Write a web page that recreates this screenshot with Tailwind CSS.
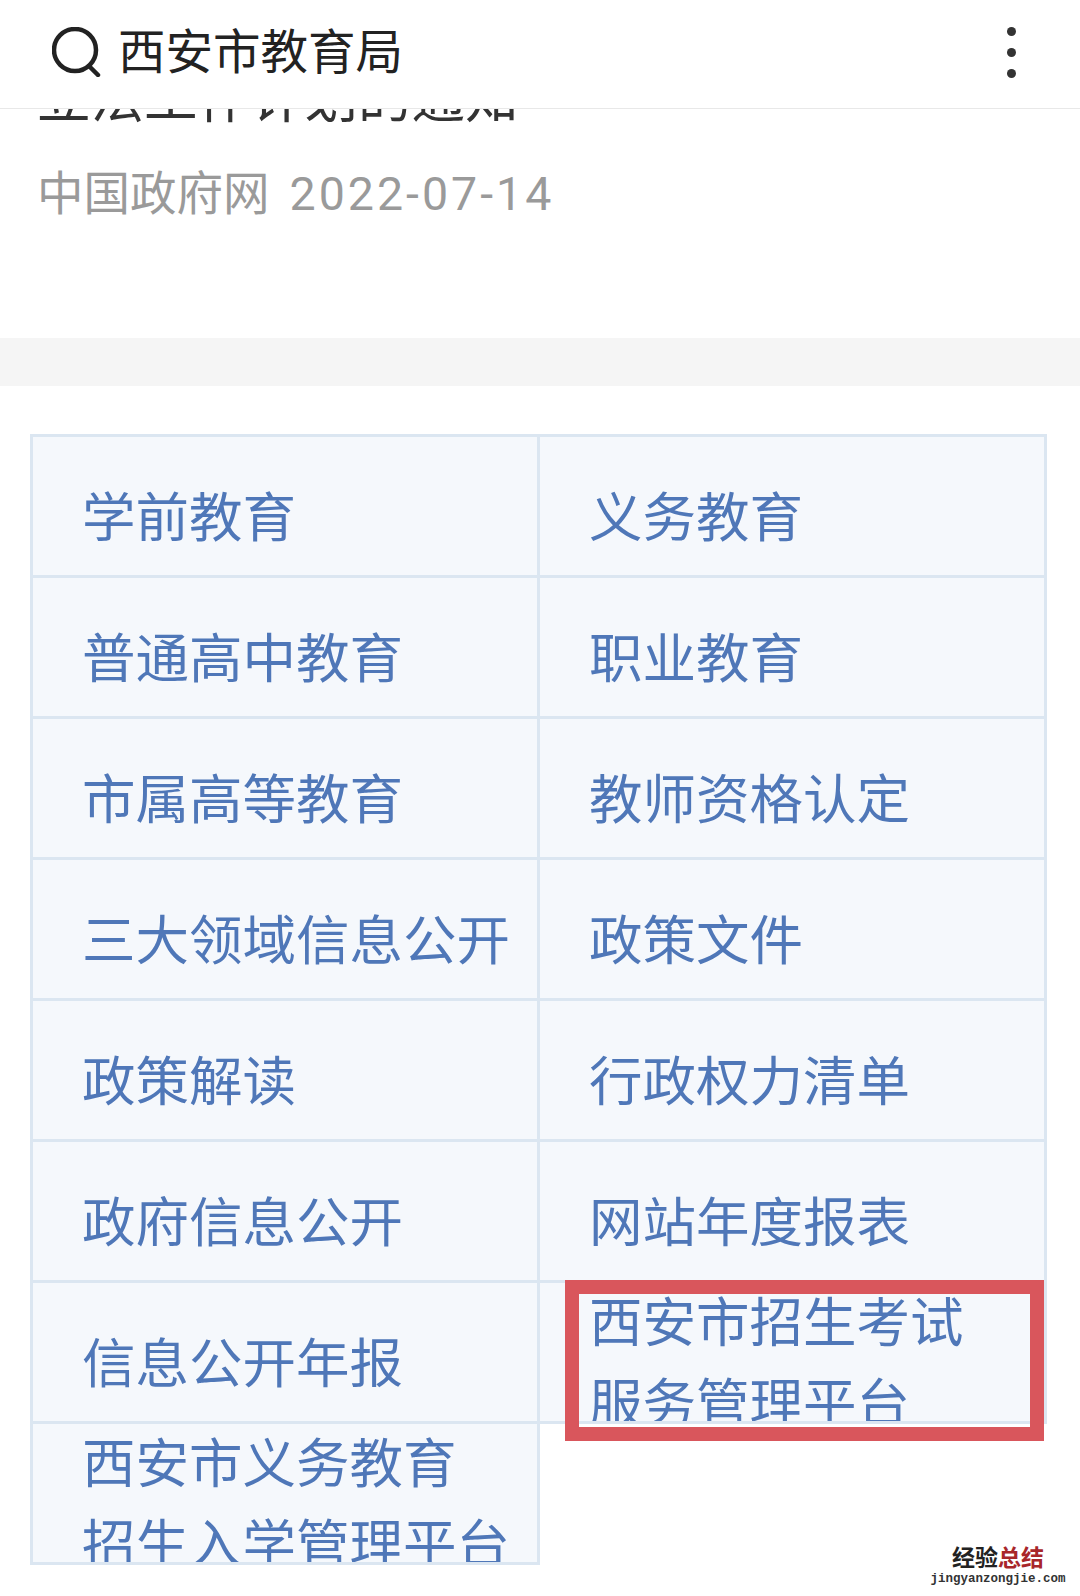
<!DOCTYPE html>
<html lang="zh-CN">
<head>
    <meta charset="UTF-8">
    <meta name="viewport" content="width=device-width, initial-scale=1.0">
    <title>西安市教育局</title>
    <script src="https://cdn.jsdelivr.net/npm/@tailwindcss/browser@4"></script>
</head>
<body class="bg-white font-['Roboto','Noto_Sans_CJK_SC',sans-serif]">
<div class="relative h-[1596px] w-[1080px] overflow-hidden">
    <!-- top search bar -->
    <header class="relative z-10 flex h-[109px] items-center justify-between border-b border-[#e8e8e8] bg-white pb-[4px] pl-[52px] pr-[64px]">
        <div class="flex items-center gap-[16px]">
            <svg class="h-[50px] w-[50px]" viewBox="0 0 50 50" fill="none" stroke="#222" stroke-width="4.5" stroke-linecap="round">
                <circle cx="23" cy="23" r="21"/>
                <path d="M37 39l9 9"/>
            </svg>
            <span class="pt-[2px] text-[47.5px] leading-[60px] text-[#222]">西安市教育局</span>
        </div>
        <div class="flex flex-col gap-[12px]">
            <span class="h-[9px] w-[9px] rounded-full bg-[#333]"></span>
            <span class="h-[9px] w-[9px] rounded-full bg-[#333]"></span>
            <span class="h-[9px] w-[9px] rounded-full bg-[#333]"></span>
        </div>
    </header>

    <!-- article scrolled under the bar -->
    <div class="mt-[-49px] px-[37px]">
        <div class="text-[53.5px] leading-[80px] text-[#333]">立法工作计划的通知</div>
        <div class="mt-[24px] flex gap-[20px] text-[46.5px] leading-[60px] text-[#9a9a9a]">
            <span>中国政府网</span>
            <span class="tracking-[3px]">2022-07-14</span>
        </div>
    </div>

    <div class="mt-[114px] h-[48px] bg-[#f5f5f5]"></div>

    <!-- link table -->
    <div class="relative ml-[30px] mt-[48px] flex w-[1017px] items-start text-[53.5px] leading-[81px] text-[#4f77b8]">
        <div class="flex w-[507px] flex-col">
            <a class="box-border h-[141px] overflow-hidden border-l-[3px] border-t-[3px] border-[#dbe6f1] bg-[#f5f8fc] pl-[49px] pt-[41px]">学前教育</a>
            <a class="box-border h-[141px] overflow-hidden border-l-[3px] border-t-[3px] border-[#dbe6f1] bg-[#f5f8fc] pl-[49px] pt-[41px]">普通高中教育</a>
            <a class="box-border h-[141px] overflow-hidden border-l-[3px] border-t-[3px] border-[#dbe6f1] bg-[#f5f8fc] pl-[49px] pt-[41px]">市属高等教育</a>
            <a class="box-border h-[141px] overflow-hidden border-l-[3px] border-t-[3px] border-[#dbe6f1] bg-[#f5f8fc] pl-[49px] pt-[41px]">三大领域信息公开</a>
            <a class="box-border h-[141px] overflow-hidden border-l-[3px] border-t-[3px] border-[#dbe6f1] bg-[#f5f8fc] pl-[49px] pt-[41px]">政策解读</a>
            <a class="box-border h-[141px] overflow-hidden border-l-[3px] border-t-[3px] border-[#dbe6f1] bg-[#f5f8fc] pl-[49px] pt-[41px]">政府信息公开</a>
            <a class="box-border h-[141px] overflow-hidden border-l-[3px] border-t-[3px] border-[#dbe6f1] bg-[#f5f8fc] pl-[49px] pt-[41px]">信息公开年报</a>
            <a class="box-border h-[144px] w-[510px] overflow-hidden border-[3px] border-[#dbe6f1] bg-[#f5f8fc] pl-[49px]">西安市义务教育<br>招生入学管理平台</a>
        </div>
        <div class="flex w-[510px] flex-col">
            <a class="box-border h-[141px] overflow-hidden border-x-[3px] border-t-[3px] border-[#dbe6f1] bg-[#f5f8fc] pl-[49px] pt-[41px]">义务教育</a>
            <a class="box-border h-[141px] overflow-hidden border-x-[3px] border-t-[3px] border-[#dbe6f1] bg-[#f5f8fc] pl-[49px] pt-[41px]">职业教育</a>
            <a class="box-border h-[141px] overflow-hidden border-x-[3px] border-t-[3px] border-[#dbe6f1] bg-[#f5f8fc] pl-[49px] pt-[41px]">教师资格认定</a>
            <a class="box-border h-[141px] overflow-hidden border-x-[3px] border-t-[3px] border-[#dbe6f1] bg-[#f5f8fc] pl-[49px] pt-[41px]">政策文件</a>
            <a class="box-border h-[141px] overflow-hidden border-x-[3px] border-t-[3px] border-[#dbe6f1] bg-[#f5f8fc] pl-[49px] pt-[41px]">行政权力清单</a>
            <a class="box-border h-[141px] overflow-hidden border-x-[3px] border-t-[3px] border-[#dbe6f1] bg-[#f5f8fc] pl-[49px] pt-[41px]">网站年度报表</a>
            <a class="box-border h-[144px] overflow-hidden border-[3px] border-[#dbe6f1] bg-[#f5f8fc] pl-[49px]">西安市招生考试<br>服务管理平台</a>
        </div>
        <!-- red annotation box drawn over the screenshot -->
        <div class="absolute left-[535px] top-[846px] box-border h-[161px] w-[479px] border-[14px] border-[#d9565c]"></div>
    </div>

    <!-- site watermark -->
    <div class="absolute left-[930px] top-[1546px] w-[136px] text-center">
        <div class="text-[23px] font-bold leading-[26px] text-[#222]">经验<span class="text-[#a8262a]">总结</span></div>
        <div class="font-['Liberation_Mono',monospace] text-[12.5px] font-bold leading-[14px] text-[#333]">jingyanzongjie.com</div>
    </div>
</div>
</body>
</html>
